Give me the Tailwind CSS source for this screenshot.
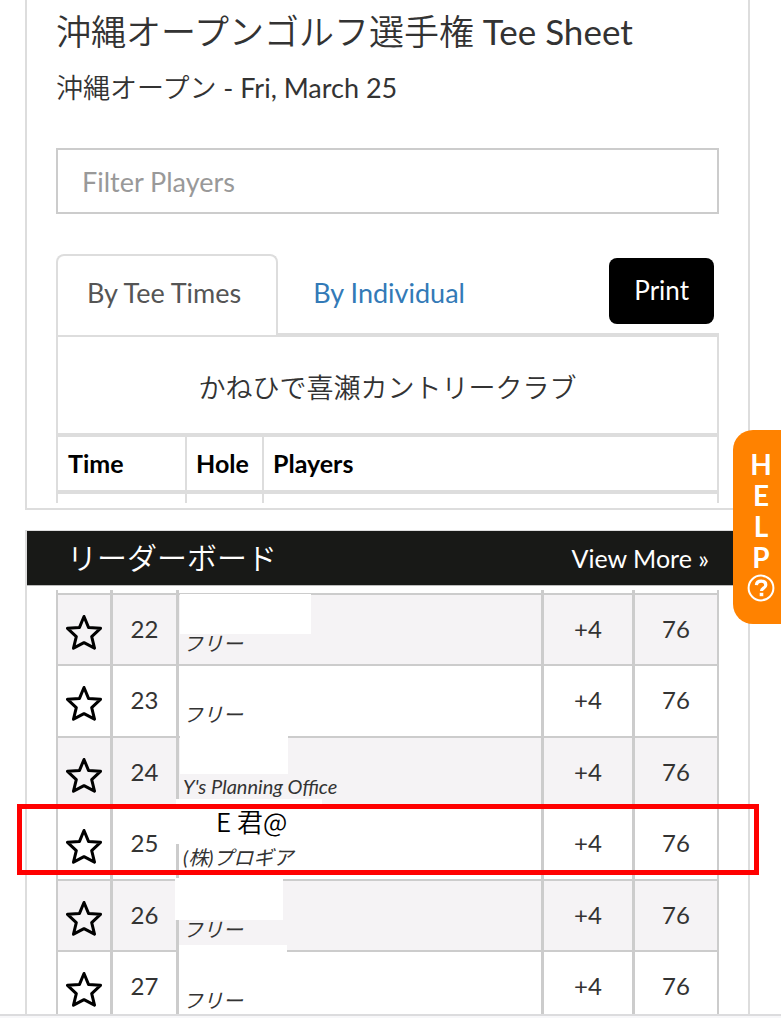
<!DOCTYPE html>
<html lang="ja">
<head>
  <meta charset="UTF-8">
  <meta name="viewport" content="width=device-width, initial-scale=1.0">
  <title>沖縄オープンゴルフ選手権 Tee Sheet</title>
  <script src="https://cdn.jsdelivr.net/npm/@tailwindcss/browser@4"></script>
</head>
<body class="font-['Lato','Noto_Sans_CJK_JP',sans-serif] bg-[#f7f7f9] text-[#333] text-[27px]">
  <div class="h-screen flex flex-col pb-0.5 overflow-hidden">
    <main class="flex-1 min-h-0 overflow-hidden bg-white border-b-2 border-[#dcdcde] pl-[25px] pr-[31px]">

      <!-- Tee sheet -->
      <section class="border-x-2 border-b-2 border-[#ddd] px-[29px] pt-1.5 pb-[5px]">
        <h1 class="text-[35px] leading-[48px]"><span class="font-['Noto_Sans_CJK_JP',sans-serif] font-[350]">沖縄オープンゴルフ選手権</span> Tee Sheet</h1>
        <h2 class="mt-3 leading-10"><span class="font-['Noto_Sans_CJK_JP',sans-serif] font-[350]">沖縄オープン</span> - Fri, March 25</h2>
        <input type="text" aria-label="Filter Players" placeholder="Filter Players" class="mt-10 block w-full h-[66px] border-2 border-[#ccc] px-6 placeholder:text-[#999]">

        <div class="mt-10 flex items-stretch">
          <a href="#times" class="flex items-center h-[81px] pl-[29px] pr-[35px] pb-1 border-2 border-b-0 border-[#ddd] rounded-t-lg text-[#555]">By Tee Times</a>
          <div class="flex-1 flex items-center justify-between border-b-2 border-[#ddd] pl-[35px] pr-[5px]">
            <a href="#individual" class="text-[#337ab7]">By Individual</a>
            <button class="bg-black text-white text-[26px] rounded-lg h-[66px] px-[25px] mb-1.5">Print</button>
          </div>
        </div>

        <div id="times" class="h-[168px] overflow-hidden">
          <h3 class="flex items-center justify-center h-[98px] pt-1 border-2 border-b-0 border-[#ddd] font-['Noto_Sans_CJK_JP',sans-serif] font-[350]">かねひで喜瀬カントリークラブ</h3>
          <table class="w-full table-fixed border-separate border-spacing-0 border-l-2 border-[#ddd] text-[25px] text-black">
            <colgroup><col class="w-[129px]"><col class="w-[77px]"><col></colgroup>
            <thead>
              <tr class="h-[61px] text-left">
                <th class="border-y-4 border-r-2 border-[#ddd] pl-[10px]">Time</th>
                <th class="border-y-4 border-r-2 border-[#ddd] pl-[9px]">Hole</th>
                <th class="border-y-4 border-r-2 border-[#ddd] pl-[9px]">Players</th>
              </tr>
            </thead>
            <tbody>
              <tr class="h-[60px]">
                <td class="border-r-2 border-[#ddd]"></td>
                <td class="border-r-2 border-[#ddd]"></td>
                <td class="border-r-2 border-[#ddd]"></td>
              </tr>
            </tbody>
          </table>
        </div>
      </section>

      <!-- Leaderboard -->
      <section class="mt-5 border-x-2 border-t border-[#ddd]">
        <header class="flex items-center justify-between h-[55px] bg-[#181917] text-white pl-[40px] pr-[39px] border-b border-[#bbb]">
          <h2 class="text-[30px] pb-1 font-['Noto_Sans_CJK_JP',sans-serif] font-[350]">リーダーボード</h2>
          <a href="#board" class="text-[25px] pt-0.5">View More »</a>
        </header>
        <div id="board" class="mt-1 px-[29px]">
          <table class="w-full table-fixed border-separate border-spacing-0 border-l-2 border-[#ccc] text-[24px] text-center">
            <colgroup><col class="w-[55px]"><col class="w-[66px]"><col><col class="w-[91px]"><col class="w-[84px]"></colgroup>
            <thead>
              <tr class="h-[5px]">
                <th class="border-r-3 border-b-2 border-[#ccc]"></th>
                <th class="border-r-3 border-b-2 border-[#ccc]"></th>
                <th class="border-r-3 border-b-2 border-[#ccc]"></th>
                <th class="border-r-3 border-b-2 border-[#ccc]"></th>
                <th class="border-r-2 border-b-2 border-[#ccc]"></th>
              </tr>
            </thead>
            <tbody id="rows"></tbody>
          </table>
        </div>
      </section>
    </main>
  </div>

  <button class="absolute right-0 top-[430px] w-12 h-[194px] rounded-l-[20px] bg-[#ff8200] text-white text-[28px] font-bold flex flex-col items-center pt-[19px] pl-2 leading-[31px]">
    <span>H</span><span>E</span><span>L</span><span>P</span>
    <svg class="w-7 h-7 mt-px shrink-0" viewBox="0 0 28 28" fill="none" stroke="#fff">
      <circle cx="14" cy="14" r="12.4" stroke-width="2"/>
      <path d="M9.4 11.2C9.6 8.6 11.6 7.2 14.2 7.2c2.7 0 4.6 1.4 4.6 3.7 0 3.4-4.3 3.1-4.3 6.1" stroke-width="3.2"/>
      <path d="M14.5 18.8v3.4" stroke-width="3.6"/>
    </svg>
  </button>

  <script>
  const star='<svg class="w-9 h-9 mx-auto" viewBox="0 0 36 36" fill="none" stroke="#000" stroke-width="3" stroke-linejoin="round"><path d="M18 2.5l4.5 10.9 12 .9-8.8 8.3 2.8 11.6L18 28.7 7.5 34.2l2.8-11.6-8.8-8.3 12-.9z"/></svg>';
  // cover = blank patch over the player's name
  const players=[
    {pos:22,club:'フリー',cover:'left-px -top-px w-[131px] h-10'},
    {pos:23,club:'フリー',cover:'left-px top-0 w-[108px] h-[108px]'},
    {pos:24,club:"Y's Planning Office",cover:''},
    {pos:25,name:'E 君@',club:'(株)プロギア',cover:'-left-[3px] -top-[10px] w-[146px] h-[45px]',marked:true},
    {pos:26,club:'フリー',cover:'-left-1 -top-[3px] w-[108px] h-[42px]'},
    {pos:27,club:'フリー',cover:'left-0 -top-[7px] w-[108px] h-[42px]'}
  ];
  const cell='border-r-3 border-b-2 border-[#ccc]';
  document.getElementById('rows').innerHTML=players.map(p=>`
    <tr class="relative odd:h-[71px] even:h-[72px] odd:bg-[#f5f3f5]">
      <td class="${cell}"><button class="block w-full pt-1" aria-label="★ ${p.pos}">${star}</button></td>
      <td class="${cell} pb-0.5">${p.pos}</td>
      <td class="${cell} relative text-left align-top">
        <span class="absolute z-10 bg-white ${p.cover}"></span>
        <div class="relative z-20 h-9 pl-[37px] text-[26px] leading-6 text-black font-['Noto_Sans_CJK_JP',sans-serif] font-[350]">${p.name||''}</div>
        <div class="relative z-20 pl-1 text-[20px] leading-6 italic">${p.club}</div>
      </td>
      <td class="${cell} pb-0.5">+4</td>
      <td class="border-r-2 border-b-2 border-[#ccc] pb-0.5">76${p.marked?'<span class="absolute z-30 -left-[41px] -right-[40px] -top-[5px] h-[71px] border-5 border-[#f00]"></span>':''}</td>
    </tr>`).join('');
  </script>
</body>
</html>
